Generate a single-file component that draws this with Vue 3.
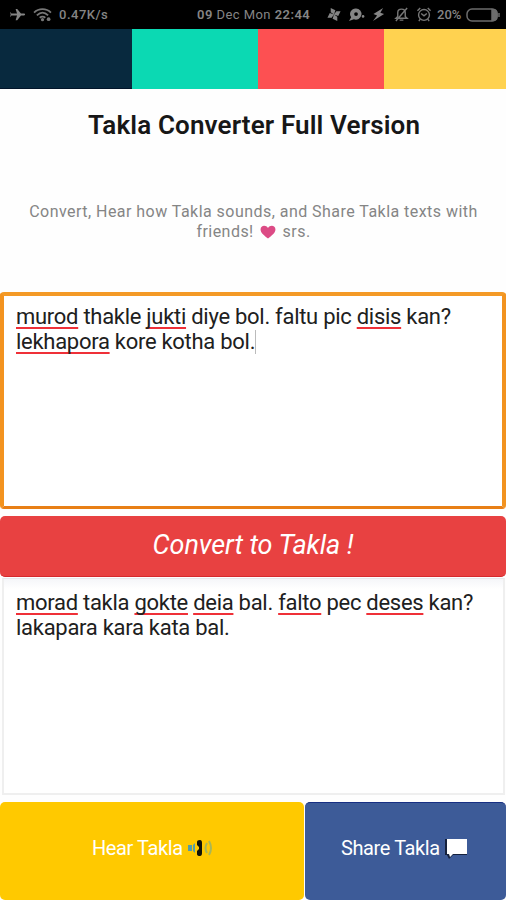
<script setup>
const input = [
  [['murod', 1], [' thakle ', 0], ['jukti', 1], [' diye bol. faltu pic ', 0], ['disis', 1], [' kan?', 0]],
  [['lekhapora', 1], [' kore kotha bol.', 0]],
]
const output = [
  [['morad', 1], [' takla ', 0], ['gokte', 1], [' ', 0], ['deia', 1], [' bal. ', 0], ['falto', 1], [' pec ', 0], ['deses', 1], [' kan?', 0]],
  [['lakapara kara kata bal.', 0]],
]
</script>

<template>
  <main class="screen">
    <header class="status">
      <svg class="plane" viewBox="0 0 18 16"><path d="M1 5l1.500 2h6L7 2h1.700l4 5H16c1.500 0 1.500 2 0 2h-3.300l-4 5H7l1.500-5h-6L1 11l.7-3z" /></svg>
      <svg class="wifi" viewBox="0 0 20 16"><path d="M1 6C6 1 14 1 19 6M4 9c4-4 8-4 12 0M7 11.500c2-1.600 4-1.600 6 0" /><circle cx="10" cy="13.500" r="1.700" /><circle cx="16.500" cy="13" r="2" /></svg>
      <span class="speed">0.47K/s</span>
      <span class="date"><b>09</b> Dec Mon <b>22:44</b></span>
      <svg class="pinwheel" viewBox="0 0 16 16"><path d="M8 8L4.500 5.500V1l5 2.500zM8 8l2.500-3.500H15l-2.500 5zM8 8l3.500 2.500V15l-5-2.500zM8 8l-2.500 3.500H1l2.500-5z" /></svg>
      <svg class="bubble" viewBox="0 0 18 16"><path fill-rule="evenodd" d="M8.500 1.500a6 6 0 1 1-2.300 11.600L1 15l2.300-4A6 6 0 0 1 8.500 1.500zm0 4a2 2 0 1 0 0 4 2 2 0 0 0 0-4z" /><circle cx="16" cy="10" r="1.400" /></svg>
      <svg class="bolt" viewBox="0 0 14 16"><path d="M12 1L1.500 7.500l4 1.500L1 15l12-7.500L9 6z" /></svg>
      <svg class="bell" viewBox="0 0 16 16"><path d="M2 12h12l-2-2V6C12 1 4 1 4 6v4zM6 14h4M14 1L2 15" /></svg>
      <svg class="alarm" viewBox="0 0 16 16"><circle cx="8" cy="8.500" r="5.800" /><path d="M1 4l3-3M12 1l3 3M5 7l3 2.500L11 7M4 13l-1.500 2M12 13l1.500 2" /></svg>
      <span class="percent">20%</span>
      <svg class="battery" viewBox="0 0 34 14"><rect x="1" y="1" width="30" height="12" rx="5" /><path class="charge" d="M26 1.500h1q4 0 4 4v3q0 4-4 4h-1z" /><path d="M33 5v4" /></svg>
    </header>
    <div class="palette"><i class="navy" /><i class="mint" /><i class="coral" /><i class="sun" /></div>
    <h1>Takla Converter Full Version</h1>
    <p class="intro"><span>Convert, Hear how Takla sounds, and Share Takla texts with</span><br><span>friends! <svg class="heart" viewBox="0 0 18 16"><path d="M9 15.500C5 12 .5 9 .5 5 .5 0 7-.5 9 3.500 11-.5 17.500 0 17.500 5c0 4-4.500 7-8.500 10.500z" /></svg> srs.</span></p>
    <section class="editor active">
      <div v-for="(line, n) in input" :key="n" class="line"><span v-for="([text, wrong], i) in line" :key="i" :class="{ wrong }">{{ text }}</span><i v-if="n === 1" class="caret" /></div>
    </section>
    <button class="convert"><span>Convert to Takla !</span></button>
    <section class="editor result">
      <div v-for="(line, n) in output" :key="n" class="line"><span v-for="([text, wrong], i) in line" :key="i" :class="{ wrong }">{{ text }}</span></div>
    </section>
    <footer>
      <button class="hear"><span>Hear Takla</span>
        <svg class="speaker" viewBox="0 0 25 18"><path fill="#559da6" d="M0 6h4v6H0zM5 6l2-2v10l-2-2z" /><path fill="#101208" d="M9 3q0-2 3-2 2 0 2 3v10q0 3-2 3-3 0-3-2v-3l2-2V8L9 6z" /><path class="waves" d="M19 4q-3 5 0 10M21 2q4 7 0 14" /></svg>
      </button>
      <button class="share"><span>Share Takla</span>
        <svg class="chat" viewBox="0 0 23 21"><path fill="#15213d" d="M0 1h22v16H8l-4 4-2-4H0z" /><path fill="#fff" d="M2 1h20v15H8l-3 3-1-3H2z" /></svg>
      </button>
    </footer>
  </main>
</template>

<style>
body { background: #fff; }
</style>

<style scoped>
* { box-sizing: border-box; }
.screen { width: 506px; height: 900px; overflow: hidden; background: #fefefe; font-family: Roboto, sans-serif; }
svg { display: block; flex: none; }
button { border: 0; padding: 0; font-family: inherit; color: #fff; }
.status { height: 29px; background: #000; color: #858585; display: flex; align-items: center; font-size: 13px; white-space: nowrap; }
.status svg { fill: #858585; stroke: none; height: 15px; }
.status .plane { width: 17px; margin-left: 9px; }
.status .wifi { width: 19px; margin-left: 7px; fill: none; stroke: #777; stroke-width: 1.9; }
.wifi circle { fill: #777; stroke: none; }
.speed { margin-left: 7px; width: 50px; font-weight: 500; letter-spacing: .5px; }
.date { margin-left: 88px; width: 115px; letter-spacing: .45px; }
.date b { font-weight: 600; }
.status .pinwheel { width: 16px; margin-left: 14px; }
.status .bubble { width: 17px; margin-left: 6px; }
.status .bolt { width: 13px; margin-left: 7px; }
.status .bell { width: 15px; margin-left: 9px; }
.status .alarm { width: 16px; margin-left: 7px; }
.status .bell, .status .alarm { fill: none; stroke: #777; stroke-width: 1.5; }
.percent { margin-left: 5px; width: 25px; font-weight: 500; font-size: 13px; }
.status .battery { width: 34px; height: 14px; margin-left: 4px; fill: none; stroke: #6c6c6c; stroke-width: 1.5; }
.battery .charge { fill: #6c6c6c; }
.palette { height: 60px; display: grid; grid-template-columns: 132px 126px 126px 122px; }
.navy { background: #08293e; border-bottom: 1px solid #02152a; }
.mint { background: #0bd9b3; }
.coral { background: #fd5052; }
.sun { background: #ffd250; }
h1 { margin: 19px 0 0; padding-left: 88px; font-size: 26px; line-height: 34px; font-weight: 600; color: #171717; white-space: nowrap; letter-spacing: .14px; }
.intro { margin: 60px 0 0; padding-left: 1px; height: 90px; text-align: center; font-size: 16px; line-height: 20px; color: #858585; white-space: nowrap; letter-spacing: .46px; }
.heart { display: inline-block; width: 18px; height: 14px; margin: 0 1px; vertical-align: -2px; fill: #dc4b85; }
.editor { padding: 8px 12px; background: #fff; }
.active { height: 217px; border: 4px solid #f3921e; border-color: #f49a26 #f29320 #e87f16 #f3931f; border-bottom-width: 3px; border-radius: 4px; }
.line { height: 25px; font-size: 22px; line-height: 25px; color: #202020; white-space: pre; letter-spacing: -.28px; }
.wrong { text-decoration: underline; text-decoration-color: #ef3038; text-decoration-thickness: 2px; text-underline-offset: 3px; text-decoration-skip-ink: none; }
.caret { display: inline-block; width: 1px; height: 24px; background: #bbb; vertical-align: -5px; }
.convert { display: flex; justify-content: center; align-items: center; width: 506px; height: 61px; margin-top: 7px; padding-bottom: 3px; border-radius: 5px; background: #e84141; border-bottom: 1px solid #d5292d; font-size: 27px; font-style: italic; letter-spacing: -.1px; }
.result { height: 217px; margin: 1px 1px 0 2px; padding: 11px 12px; border: 2px solid #efefef; border-top: 1px solid #e7e7ec; background: linear-gradient(#f5f6f9, #fff 10px); }
footer { display: flex; gap: 1px; height: 98px; margin-top: 7px; }
footer button { display: flex; align-items: center; font-size: 20px; padding-bottom: 7px; border-radius: 5px; white-space: nowrap; letter-spacing: -.4px; }
.hear { width: 304px; padding-left: 92px; background: #ffc900; }
.share { width: 201px; padding-left: 36px; background: #3d5b98; border-top: 1px solid #172f83; }
.speaker { width: 25px; height: 18px; margin-left: 5px; }
.waves { fill: none; stroke: #a9b657; stroke-width: 2; }
.chat { width: 23px; height: 21px; margin-left: 5px; }
</style>
